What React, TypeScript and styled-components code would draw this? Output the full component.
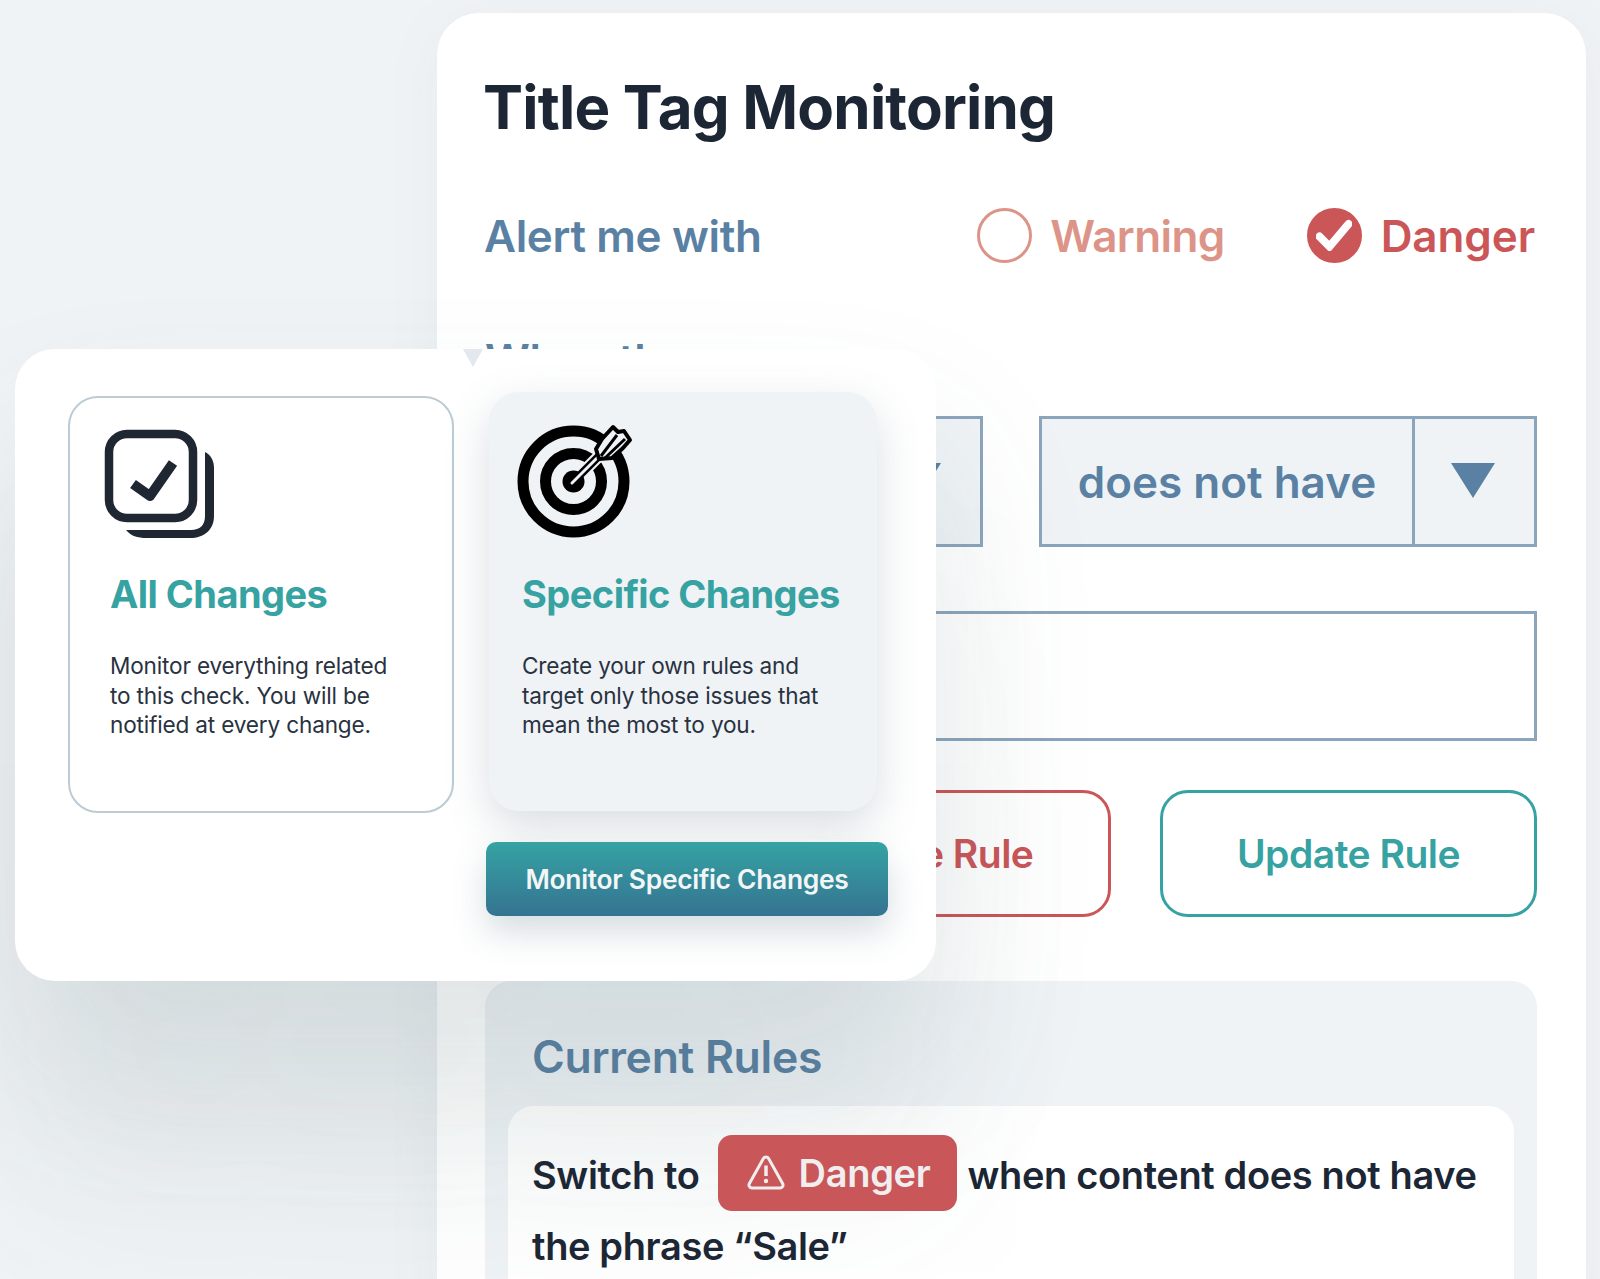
import React from "react";
import styled, { createGlobalStyle } from "styled-components";

const Global = createGlobalStyle`
  html, body { margin: 0; padding: 0; background: #f0f3f5; }
  body { font-family: Inter, "Liberation Sans", sans-serif; }
`;

const Page = styled.div`
  position: relative;
  width: 1600px;
  height: 1279px;
  overflow: hidden;
  background: #f0f3f5;
  padding: 13px 14px 0 437px;
  box-sizing: border-box;
`;

const MainPanel = styled.main`
  background: #fff;
  border-radius: 42px 42px 0 0;
  height: 1300px;
  padding: 54px 49px 0 48px;
  box-sizing: border-box;
  box-shadow: 0 10px 60px rgba(90, 115, 135, 0.06);
`;

const Title = styled.h1`
  margin: 0 0 0 -2px;
  font-size: 60px;
  line-height: 80px;
  font-weight: 700;
  letter-spacing: -0.8px;
  color: #1c2634;
`;

const AlertRow = styled.div`
  display: flex;
  align-items: center;
  margin: 61px 2px 0 0;
  height: 56px;
`;

const RowLabel = styled.h2`
  margin: 0 0 0 -1px;
  flex: 1;
  font-size: 44px;
  line-height: 56px;
  font-weight: 600;
  letter-spacing: -0.35px;
  color: #5a81a3;
`;

const SeverityOption = styled.div<{ $spaced?: boolean }>`
  display: flex;
  align-items: center;
  gap: 18px;
  margin-left: ${(p) => (p.$spaced ? "82px" : "0")};
  &:last-child {
    gap: 19px;
  }
`;

const Radio = styled.span<{ $checked?: boolean }>`
  width: 55px;
  height: 55px;
  margin-bottom: 2px;
  border-radius: 50%;
  box-sizing: border-box;
  display: flex;
  align-items: center;
  justify-content: center;
  border: 3px solid ${(p) => (p.$checked ? "#cb5658" : "#dd9488")};
  background: ${(p) => (p.$checked ? "#cb5658" : "#fff")};
`;

const SeverityText = styled.span<{ $checked?: boolean }>`
  font-size: 44px;
  line-height: 56px;
  font-weight: 600;
  letter-spacing: ${(p) => (p.$checked ? "-0.1px" : "-0.6px")};
  color: ${(p) => (p.$checked ? "#cb5658" : "#dd9488")};
`;

const WhenLabel = styled.h2`
  margin: 68px 0 0;
  font-size: 44px;
  line-height: 56px;
  font-weight: 600;
  letter-spacing: -0.35px;
  color: #5a81a3;
  height: 56px;
`;

const SelectRow = styled.div`
  display: grid;
  grid-template-columns: 498px 498px;
  column-gap: 56px;
  margin-top: 28px;
`;

const Select = styled.div`
  display: grid;
  grid-template-columns: 1fr 122px;
  height: 131px;
  box-sizing: border-box;
  border: 3px solid #8ba5bc;
  background: #eff3f6;
`;

const SelectValue = styled.div`
  display: flex;
  align-items: center;
  justify-content: center;
  font-size: 44px;
  font-weight: 600;
  letter-spacing: 0;
  color: #5a81a3;
`;

const SelectCaret = styled.div`
  display: flex;
  align-items: center;
  justify-content: center;
  border-left: 3px solid #8ba5bc;
  &::after {
    content: "";
    width: 0;
    height: 0;
    margin: 0 4px 2px 0;
    border-left: 22px solid transparent;
    border-right: 22px solid transparent;
    border-top: 35px solid #5a81a3;
  }
`;

const PhraseInput = styled.div`
  height: 130px;
  margin-top: 64px;
  box-sizing: border-box;
  border: 3px solid #8ba5bc;
`;

const ButtonRow = styled.div`
  display: flex;
  justify-content: flex-end;
  gap: 49px;
  margin-top: 49px;
`;

const OutlineButton = styled.button<{ $tone: string; $nudge?: number }>`
  width: 377px;
  height: 127px;
  box-sizing: border-box;
  padding: 0 0 0 ${(p) => p.$nudge ?? 0}px;
  background: #fff;
  border: 3px solid ${(p) => p.$tone};
  border-radius: 28px;
  color: ${(p) => p.$tone};
  font-family: inherit;
  font-size: 39px;
  font-weight: 600;
  letter-spacing: -0.5px;
`;

const RulesBox = styled.section`
  margin-top: 64px;
  background: #eff3f6;
  border-radius: 26px 26px 0 0;
  padding: 46px 23px 0 23px;
  height: 400px;
  box-sizing: border-box;
`;

const RulesTitle = styled.h3`
  margin: 0 0 0 24px;
  font-size: 44.5px;
  line-height: 60px;
  font-weight: 600;
  letter-spacing: -0.3px;
  color: #5a81a3;
`;

const RuleCard = styled.div`
  margin-top: 19px;
  background: #fff;
  border-radius: 26px;
  padding: 34px 24px 0;
  height: 300px;
  box-sizing: border-box;
  font-size: 38px;
  line-height: 70px;
  font-weight: 600;
  letter-spacing: -0.36px;
  color: #1c2634;
`;

const DangerBadge = styled.span`
  display: inline-flex;
  align-items: center;
  gap: 14px;
  height: 76px;
  width: 239px;
  margin: -6px 11px -6px 18px;
  padding: 0 0 0 29px;
  box-sizing: border-box;
  vertical-align: middle;
  position: relative;
  top: -6px;
  z-index: 1;
  background: #c95658;
  color: #f0eeee;
  border-radius: 14px;
  letter-spacing: -0.3px;
  font-weight: 600;
`;

const Popover = styled.aside`
  position: absolute;
  left: 15px;
  top: 349px;
  width: 921px;
  height: 632px;
  box-sizing: border-box;
  padding: 43px 39px 0 53px;
  background: #fff;
  border-radius: 40px;
  box-shadow: 0 100px 170px rgba(70, 95, 110, 0.12), 0 220px 200px rgba(70, 95, 110, 0.06);
  display: grid;
  grid-template-columns: 386px 402px;
  column-gap: 32px;
  &::before {
    content: "";
    position: absolute;
    left: 448px;
    top: 0;
    width: 0;
    height: 0;
    border-left: 10px solid transparent;
    border-right: 10px solid transparent;
    border-top: 18px solid #e2e8ed;
  }
`;

const AllCard = styled.div`
  margin-top: 4px;
  height: 417px;
  box-sizing: border-box;
  border: 2px solid #bccbd4;
  border-radius: 30px;
  padding: 32px 0 0 35px;
`;

const SpecificColumn = styled.div`
  display: flex;
  flex-direction: column;
`;

const SpecificCard = styled.div`
  margin-left: 3px;
  width: 388px;
  height: 419px;
  box-sizing: border-box;
  background: #eff3f6;
  border-radius: 30px;
  padding: 33px 0 0 28px;
  box-shadow: 0 16px 44px rgba(80, 105, 125, 0.22);
`;

const CardIcon = styled.svg`
  display: block;
  width: 116px;
  height: 116px;
  overflow: visible;
`;

const CardTitle = styled.h4<{ $indent: number; $gap: number }>`
  margin: ${(p) => p.$gap}px 0 0 ${(p) => p.$indent}px;
  font-size: 38px;
  line-height: 48px;
  font-weight: 700;
  letter-spacing: -0.55px;
  color: #36a2a1;
`;

const CardText = styled.p<{ $indent: number }>`
  margin: 33px 0 0 ${(p) => p.$indent}px;
  font-size: 22.6px;
  line-height: 29.6px;
  font-weight: 400;
  letter-spacing: -0.18px;
  color: #29323f;
`;

const PrimaryButton = styled.button`
  margin-top: 31px;
  width: 402px;
  height: 74px;
  border: 0;
  padding: 0;
  border-radius: 10px;
  background: linear-gradient(180deg, #35a3a3 0%, #357391 100%);
  color: #f2f6f7;
  font-family: inherit;
  font-size: 26.4px;
  font-weight: 600;
  letter-spacing: -0.3px;
  box-shadow: 0 16px 34px rgba(70, 100, 120, 0.22);
`;

const Check = () => (
  <svg width="36" height="32" viewBox="0 0 36 32" fill="none">
    <path d="M3.5 17.5 L13.5 27.5 L32.5 5" stroke="#fff" strokeWidth="8" strokeLinecap="round" strokeLinejoin="miter" />
  </svg>
);

const StackIcon = () => (
  <CardIcon viewBox="0 0 116 116">
    <rect x="4" y="4" width="84" height="84" rx="18" fill="none" stroke="#1f2733" strokeWidth="8.5" />
    <path d="M21 100 H86 C95 100 100 95 100 86 V22 C106 25 109 31 109 38 V86 C109 100 99 108 85 108 H42 C32 108 26 106 21 100 Z" fill="#1f2733" />
    <path d="M28 54 L45 66 L68 33" fill="none" stroke="#1f2733" strokeWidth="10" strokeLinejoin="round" />
  </CardIcon>
);

const TargetIcon = () => (
  <CardIcon viewBox="0 0 116 116">
    <circle cx="56.5" cy="56.5" r="50.5" fill="none" stroke="#000" strokeWidth="11" />
    <circle cx="56.5" cy="56.5" r="28" fill="none" stroke="#000" strokeWidth="11" />
    <circle cx="56.5" cy="56.5" r="11" fill="#000" />
    <path d="M64 49 L86 27" stroke="#eff3f6" strokeWidth="12" />
    <path d="M55 58 L86 27" stroke="#000" strokeWidth="8" strokeLinecap="round" />
    <path d="M55 58 L86 27" stroke="#eff3f6" strokeWidth="3" strokeLinecap="round" />
    <path d="M82 34 L79 24 L85 14 L96 2 L101 7 L107 6 L113 15 L106 23 L95 33 Z" fill="#eff3f6" stroke="#000" strokeWidth="4" strokeLinejoin="round" />
    <path d="M84 31 L100 10 M88 33 L108 14" stroke="#000" strokeWidth="3" />
  </CardIcon>
);

const WarningIcon = () => (
  <svg width="38" height="35" viewBox="0 0 38 35" fill="none">
    <path d="M16.4 3.5 a3 3 0 0 1 5.2 0 L35.6 28.5 a3 3 0 0 1 -2.6 4.5 H5 a3 3 0 0 1 -2.6 -4.5 Z" stroke="#f0eeee" strokeWidth="3" strokeLinejoin="round" />
    <path d="M19 10.5 V21" stroke="#f0eeee" strokeWidth="3.5" />
    <circle cx="19" cy="26" r="2.2" fill="#f0eeee" />
  </svg>
);

export default function App() {
  return (
    <Page>
      <Global />
      <MainPanel>
        <Title>Title Tag Monitoring</Title>
        <AlertRow>
          <RowLabel>Alert me with</RowLabel>
          <SeverityOption>
            <Radio />
            <SeverityText>Warning</SeverityText>
          </SeverityOption>
          <SeverityOption $spaced>
            <Radio $checked>
              <Check />
            </Radio>
            <SeverityText $checked>Danger</SeverityText>
          </SeverityOption>
        </AlertRow>
        <WhenLabel>When the</WhenLabel>
        <SelectRow>
          <Select>
            <SelectValue>content</SelectValue>
            <SelectCaret />
          </Select>
          <Select>
            <SelectValue>does not have</SelectValue>
            <SelectCaret />
          </Select>
        </SelectRow>
        <PhraseInput />
        <ButtonRow>
          <OutlineButton $tone="#cb5658" $nudge={14}>Delete Rule</OutlineButton>
          <OutlineButton $tone="#36a2a1">Update Rule</OutlineButton>
        </ButtonRow>
        <RulesBox>
          <RulesTitle>Current Rules</RulesTitle>
          <RuleCard>
            Switch to
            <DangerBadge>
              <WarningIcon />
              Danger
            </DangerBadge>
            when content does not have
            <br />
            the phrase “Sale”
          </RuleCard>
        </RulesBox>
      </MainPanel>
      <Popover>
        <AllCard>
          <StackIcon />
          <CardTitle $indent={5} $gap={24}>All Changes</CardTitle>
          <CardText $indent={5}>
            Monitor everything related
            <br />
            to this check. You will be
            <br />
            notified at every change.
          </CardText>
        </AllCard>
        <SpecificColumn>
          <SpecificCard>
            <TargetIcon />
            <CardTitle $indent={5} $gap={29}>Specific Changes</CardTitle>
            <CardText $indent={5}>
              Create your own rules and
              <br />
              target only those issues that
              <br />
              mean the most to you.
            </CardText>
          </SpecificCard>
          <PrimaryButton>Monitor Specific Changes</PrimaryButton>
        </SpecificColumn>
      </Popover>
    </Page>
  );
}
